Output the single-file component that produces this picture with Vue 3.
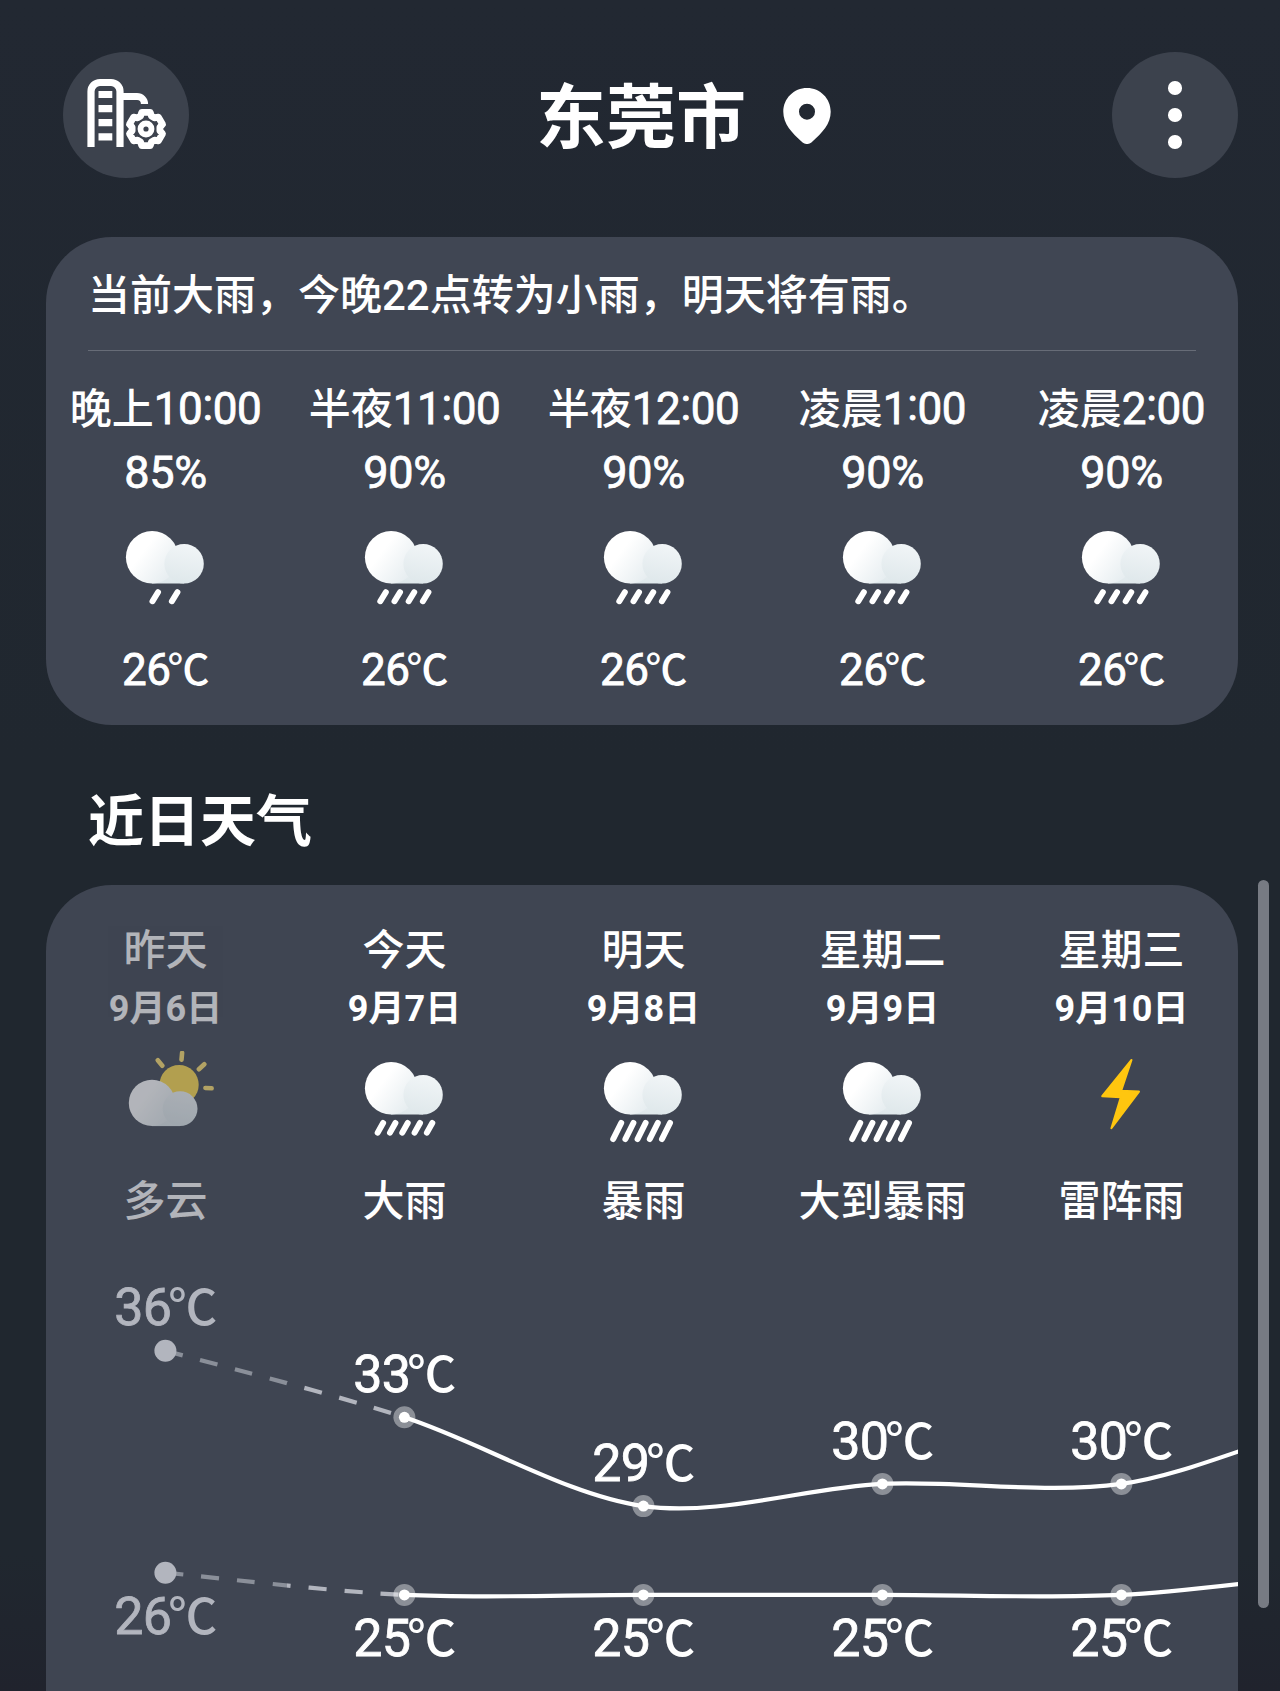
<template>
  <div class="page">
    <header class="header">
      <button class="round-btn">
        <svg viewBox="0 0 126 126" fill="none" stroke="#fff" stroke-width="7.2">
          <path d="M28 91.500V39.500a9 9 0 0 1 9-9h11a9 9 0 0 1 9 9V91.500" stroke-linecap="square" />
          <path d="M58 44.500H74a7.500 7.500 0 0 1 7.500 7.500" />
          <path d="M35.500 42.500h13.800M35.500 56.700h13.800M35.500 70.700h13.800M35.500 84.800h13.800" />
          <path :d="gearPath" stroke-width="6.800" stroke-linejoin="round" />
          <circle cx="83" cy="77" r="5.500" stroke-width="5.800" />
        </svg>
      </button>
      <h1 class="city">
        {{ city }}
        <svg class="pin" viewBox="0 0 48 56">
          <path
            fill="#fff"
            fill-rule="evenodd"
            d="M24 0C10.800 0 .3 10.500 .3 23.700c0 12 8.200 20.800 19.300 30.700 2.700 2.200 6.100 2.200 8.800 0C39.500 44.500 47.700 35.700 47.700 23.700 47.700 10.500 37.200 0 24 0ZM24 15.700a8 8 0 1 1 0 16 8 8 0 0 1 0-16Z"
          />
        </svg>
      </h1>
      <button class="round-btn more">
        <i></i><i></i><i></i>
      </button>
    </header>

    <section class="card hourly">
      <p class="summary">{{ summary }}</p>
      <div class="columns">
        <div v-for="item in hours" :key="item.hour" class="column">
          <div class="time">
            {{ item.part }}<span class="num">{{ item.hour }}<span class="colon">:</span>00</span>
          </div>
          <div class="chance">{{ item.chance }}%</div>
          <svg class="icon" viewBox="0.8 0 100 100">
            <path d="M36.900 30H68.900V63.400H36.900z" fill="url(#cloudSmall)" />
            <circle cx="36.900" cy="37.200" r="26.200" fill="url(#cloudBig)" />
            <circle cx="68.900" cy="43.700" r="19.700" fill="url(#cloudSmall)" />
            <path :d="rain[item.rain]" class="drops" />
          </svg>
          <div class="temp">{{ item.temp }}<span class="unit">℃</span></div>
        </div>
      </div>
    </section>

    <h2 class="section-title">近日天气</h2>

    <section class="card daily">
      <div class="columns">
        <div v-for="day in days" :key="day.date" class="column" :class="{ past: day.past }">
          <div class="day">{{ day.name }}</div>
          <div class="date">{{ day.date }}</div>
          <svg class="icon" viewBox="0.8 0 100 100">
            <template v-if="day.icon === 'cloudy'">
              <circle cx="63.900" cy="33.700" r="19.600" fill="#ffdc4e" />
              <path
                d="M66.900 1.900L66.300 8.700M42.600 9.200L47.100 14.700M89.100 13.200L83.700 18.200M90.200 37L96.400 37.300"
                class="rays"
              />
              <path d="M36.800 52H64.900V75.100H36.800z" fill="url(#cloudSmall)" />
              <circle cx="36.800" cy="51.900" r="23.200" fill="url(#cloudBig)" />
              <circle cx="64.900" cy="57.700" r="17.400" fill="url(#cloudSmall)" />
            </template>
            <path
              v-else-if="day.icon === 'thunder'"
              d="M60.300 9L31 45.200L49.600 46.200L40.200 77.200L67.800 40.600L50 39.700Z"
              class="bolt"
            />
            <template v-else>
              <path d="M36.900 30H68.900V63.400H36.900z" fill="url(#cloudSmall)" />
              <circle cx="36.900" cy="37.200" r="26.200" fill="url(#cloudBig)" />
              <circle cx="68.900" cy="43.700" r="19.700" fill="url(#cloudSmall)" />
              <path :d="rain[day.icon]" class="drops" />
            </template>
          </svg>
          <div class="weather">{{ day.weather }}</div>
        </div>
      </div>

      <svg class="chart" viewBox="0 0 1192 441" width="1192" height="441">
        <defs>
          <linearGradient id="fade" gradientUnits="userSpaceOnUse" x1="119" y1="0" x2="358" y2="0">
            <stop offset=".51" stop-color="#8a8f99" />
            <stop offset=".51" stop-color="#b2b5be" />
          </linearGradient>
          <linearGradient id="cloudBig" x1="0.100" y1="0.200" x2="0.900" y2="0.800">
            <stop offset=".3" stop-color="#fff" />
            <stop offset="1" stop-color="#e6edf0" />
          </linearGradient>
          <linearGradient id="cloudSmall" x1="0.600" y1="0" x2="0.400" y2="1">
            <stop offset="0" stop-color="#f1f5f7" />
            <stop offset="1" stop-color="#dfe8eb" />
          </linearGradient>
        </defs>
        <g v-for="line in lines" :key="line.key">
          <path :d="line.dashed" class="line dashed" />
          <path :d="line.solid" class="line" />
          <g v-for="(point, i) in line.points" :key="i" :class="{ faded: i === 0 }">
            <circle :cx="point.x" :cy="point.y" r="11" class="halo" />
            <circle v-if="i > 0" :cx="point.x" :cy="point.y" r="5.500" fill="#fff" />
            <text :x="point.x" :y="point.y + line.offset" class="label">
              {{ point.temp }}<tspan class="unit" dx="-3">℃</tspan>
            </text>
          </g>
        </g>
      </svg>
    </section>

    <div class="scrollbar"></div>
  </div>
</template>

<script setup>
const city = '东莞市'
const summary = '当前大雨，今晚22点转为小雨，明天将有雨。'

const hours = [
  { part: '晚上', hour: 10, chance: 85, rain: 'light', temp: 26 },
  { part: '半夜', hour: 11, chance: 90, rain: 'moderate', temp: 26 },
  { part: '半夜', hour: 12, chance: 90, rain: 'moderate', temp: 26 },
  { part: '凌晨', hour: 1, chance: 90, rain: 'moderate', temp: 26 },
  { part: '凌晨', hour: 2, chance: 90, rain: 'moderate', temp: 26 }
]

const days = [
  { name: '昨天', date: '9月6日', icon: 'cloudy', weather: '多云', past: true },
  { name: '今天', date: '9月7日', icon: 'heavy', weather: '大雨' },
  { name: '明天', date: '9月8日', icon: 'storm', weather: '暴雨' },
  { name: '星期二', date: '9月9日', icon: 'storm', weather: '大到暴雨' },
  { name: '星期三', date: '9月10日', icon: 'thunder', weather: '雷阵雨' }
]

const makeDrops = (count, start, step, top, dx, dy) => {
  let d = ''
  for (let i = 0; i < count; i++) {
    d += `M${start + i * step} ${top}l${-dx} ${dy}`
  }
  return d
}

const rain = {
  light: makeDrops(2, 42.8, 19.4, 72.2, 5.5, 9),
  moderate: makeDrops(4, 31.6, 14.2, 72.2, 5.5, 9),
  heavy: makeDrops(5, 28.9, 12.3, 72, 5.4, 9.6),
  storm: makeDrops(5, 28, 12.2, 72, 8, 16)
}

// шестерёнка с шестью зубьями
const gearPoint = (angle, r) => {
  const rad = (angle * Math.PI) / 180
  return `${(83 + r * Math.cos(rad)).toFixed(1)} ${(77 + r * Math.sin(rad)).toFixed(1)}`
}
const gear = []
for (let a = -90; a < 270; a += 60) {
  gear.push(gearPoint(a - 14, 17.2), gearPoint(a + 14, 17.2))
  gear.push(gearPoint(a + 23, 14), gearPoint(a + 37, 14))
}
const gearPath = `M${gear.join('L')}Z`

const colWidth = 239
const degree = 22.2
const toPoints = (temps) =>
  temps.map((temp, i) => ({ temp, x: 119.4 + i * colWidth, y: 100.7 + (36 - temp) * degree }))

const curve = (points, from, to) => {
  let d = `M${points[from].x} ${points[from].y}`
  for (let i = from; i < to; i++) {
    const prev = points[i - 1] || points[i]
    const a = points[i]
    const b = points[i + 1]
    const next = points[i + 2] || b
    d += `C${a.x + (b.x - prev.x) * 0.16} ${a.y + (b.y - prev.y) * 0.16}`
    d += ` ${b.x - (next.x - a.x) * 0.16} ${b.y - (next.y - a.y) * 0.16} ${b.x} ${b.y}`
  }
  return d
}

const makeLine = (key, temps, offset) => {
  const points = toPoints(temps)
  return {
    key,
    offset,
    points: points.slice(0, 5),
    dashed: curve(points, 0, 1),
    solid: curve(points, 1, 5)
  }
}

const lines = [
  makeLine('high', [36, 33, 29, 30, 30, 33, 33], -25.4),
  makeLine('low', [26, 25, 25, 25, 25, 26, 26], 61.5)
]
</script>

<style>
body {
  background: #20262f;
}
</style>

<style scoped>
.page {
  position: relative;
  width: 1280px;
  height: 1691px;
  padding: 52px 42px 0 46px;
  box-sizing: border-box;
  overflow: hidden;
  display: flex;
  flex-direction: column;
  color: #fff;
  background: linear-gradient(#222832, #20272f 45%, #20272f 92%, #20232d);
  font-family: Roboto, "Noto Sans CJK SC", sans-serif;
  font-weight: 500;
}

.header {
  display: flex;
  align-items: center;
  flex-shrink: 0;
  height: 126px;
  padding-left: 17px;
  margin-bottom: 59px;
}

.round-btn {
  width: 126px;
  height: 126px;
  padding: 0;
  border: none;
  border-radius: 50%;
  background: #3c424d;
}

.round-btn svg {
  display: block;
}

.more {
  display: flex;
  flex-direction: column;
  align-items: center;
  justify-content: center;
  gap: 13.4px;
  margin-left: auto;
}

.more i {
  width: 13.6px;
  height: 13.6px;
  border-radius: 50%;
  background: #fff;
}

.city {
  display: flex;
  align-items: center;
  gap: 37px;
  margin: 0 0 0 347px;
  font-family: "Noto Sans CJK SC", sans-serif;
  font-size: 70px;
  line-height: 96px;
  padding-bottom: 4px;
  font-weight: 700;
}

.pin {
  width: 48px;
  height: 56px;
  margin-top: 6px;
}

.card {
  flex-shrink: 0;
  box-sizing: border-box;
  width: 1192px;
  overflow: hidden;
  border-radius: 66px;
  background: #404653;
}

.hourly {
  height: 487.500px;
}

.summary {
  height: 114px;
  margin: 0 42px;
  box-sizing: border-box;
  padding-top: 29px;
  border-bottom: 1px solid #676c77;
  font-size: 42px;
  line-height: 60px;
}

.columns {
  display: grid;
  grid-template-columns: repeat(5, 239px);
}

.column {
  display: flex;
  flex-direction: column;
  align-items: center;
  white-space: nowrap;
}

.time {
  height: 60px;
  margin-top: 29px;
  font-size: 42px;
  line-height: 60px;
}

.num {
  font-size: 44px;
  font-weight: 400;
  line-height: 1;
  letter-spacing: -0.400px;
  -webkit-text-stroke: 0.8px #fff;
}

.colon {
  position: relative;
  top: -4px;
}

.chance {
  margin-top: 3px;
  font-size: 45px;
  font-weight: 400;
  line-height: 60px;
  letter-spacing: -0.300px;
  -webkit-text-stroke: 0.8px #fff;
}

.icon {
  width: 100px;
  height: 100px;
}

.hourly .icon {
  margin-top: 17px;
}

.temp {
  margin-top: 20px;
  font-size: 44px;
  font-weight: 400;
  line-height: 60px;
  letter-spacing: -0.500px;
  -webkit-text-stroke: 0.8px #fff;
}

.temp .unit {
  margin-left: -3px;
  font-size: 42px;
  font-weight: 500;
  line-height: 1;
  -webkit-text-stroke: 0;
}

.drops {
  fill: none;
  stroke: #fff;
  stroke-width: 6;
  stroke-linecap: round;
}

.rays {
  fill: none;
  stroke: #ffe070;
  stroke-width: 4.600;
  stroke-linecap: round;
}

.bolt {
  fill: #ffc60f;
  stroke: #ffc60f;
  stroke-width: 2;
  stroke-linejoin: round;
}

.section-title {
  flex-shrink: 0;
  height: 160.500px;
  margin: 0;
  padding: 52px 0 0 42px;
  box-sizing: border-box;
  font-family: "Noto Sans CJK SC", sans-serif;
  font-size: 56px;
  line-height: 80px;
  font-weight: 700;
}

.daily {
  height: 900px;
  background: #3f4552;
}

.past {
  opacity: 0.6;
}

.day {
  margin-top: 36px;
  font-size: 42px;
  line-height: 60px;
}

.date {
  margin-top: 3px;
  font-size: 36px;
  line-height: 50px;
  font-weight: 700;
}

.daily .icon {
  margin-top: 17px;
}

.weather {
  margin-top: 21px;
  font-size: 42px;
  line-height: 60px;
}

.chart {
  display: block;
  margin-top: 18px;
}

.line {
  fill: none;
  stroke: #fff;
  stroke-width: 4.200;
}

.dashed {
  stroke: url(#fade);
  stroke-dasharray: 18 18;
}

.halo {
  fill: rgba(255, 255, 255, 0.4);
}

.label {
  fill: #fff;
  stroke: #fff;
  stroke-width: 0.8;
  font-size: 52px;
  font-weight: 400;
  letter-spacing: -0.800px;
  text-anchor: middle;
}

.label .unit {
  stroke: none;
  font-size: 49px;
  font-weight: 500;
}

.faded .halo,
.faded .label {
  fill: #b2b5be;
}

.faded .label {
  stroke: #b2b5be;
}

.scrollbar {
  position: absolute;
  top: 880px;
  right: 11px;
  width: 11px;
  height: 728px;
  border-radius: 6px;
  background: #777b83;
}
</style>
